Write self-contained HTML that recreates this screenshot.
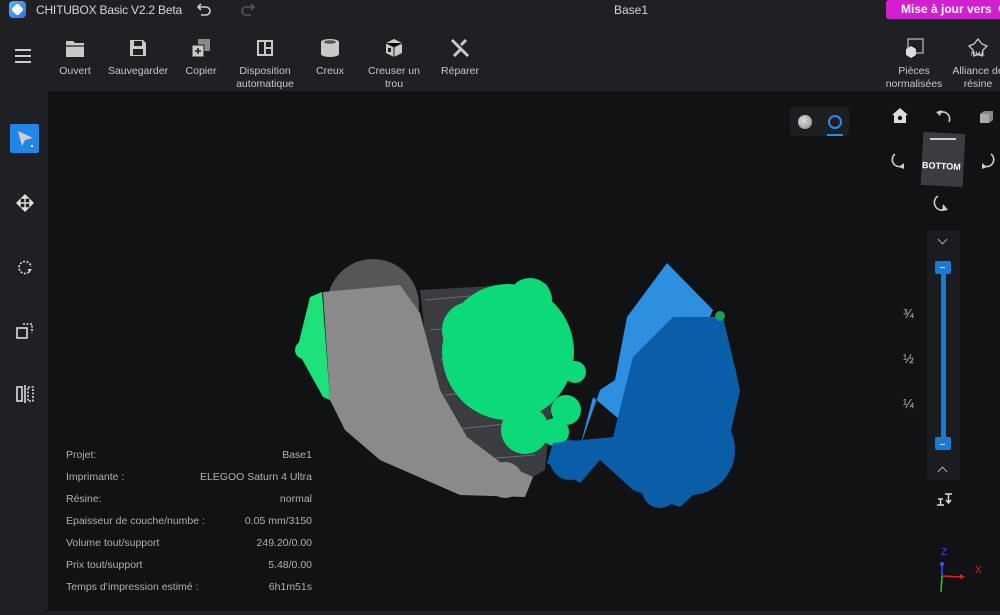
<!DOCTYPE html>
<html><head><meta charset="utf-8">
<style>
*{margin:0;padding:0;box-sizing:border-box}
body{width:1000px;height:615px;overflow:hidden;background:#111214;font-family:"Liberation Sans","DejaVu Sans",sans-serif;color:#c9c9c9;position:relative}
.top{position:absolute;left:0;top:0;width:1000px;height:91px;background:#1f2023}
.title{position:absolute;left:36px;top:3px;font-size:12px;color:#d6d6d6;letter-spacing:-0.2px}
.base{position:absolute;left:614px;top:3px;font-size:12px;color:#d6d6d6}
.upd{position:absolute;left:886px;top:0;width:114px;height:19px;background:#d21fd0;border-radius:3px 0 0 3px;color:#fff;font-weight:bold;font-size:12px;padding:2px 0 0 15px;white-space:nowrap}
.tb{position:absolute;top:37px;text-align:center;font-size:10.5px;color:#c8c8c8;line-height:13px}
.tb svg{display:block;margin:0 auto 6px}
.side{position:absolute;left:0;top:91px;width:48px;height:520px;background:#1f2023;border-radius:0 0 4px 0}
.info{position:absolute;left:66px;font-size:10.5px;color:#b0b0b0;width:246px}
.info span{float:right}
.num{position:absolute;font-size:13px;color:#bbb}
</style></head><body>
<div class="top"></div>
<div style="position:absolute;left:9px;top:1px;width:17px;height:17px;border-radius:4px;background:linear-gradient(135deg,#4fb6ff,#2f6ff0)"></div>
<div style="position:absolute;left:13px;top:5px;width:9px;height:9px;background:#fff;transform:rotate(45deg);border-radius:2px"></div>
<div class="title">CHITUBOX Basic V2.2 Beta</div>
<svg style="position:absolute;left:196px;top:2px" width="16" height="14"><path d="M5 2 L2 5 L5 8 M2 5 H10 a4 4 0 0 1 0 8 H5" fill="none" stroke="#ccc" stroke-width="1.6"/></svg>
<svg style="position:absolute;left:240px;top:2px" width="16" height="14"><path d="M11 2 L14 5 L11 8 M14 5 H6 a4 4 0 0 0 0 8 H11" fill="none" stroke="#555" stroke-width="1.6"/></svg>
<div class="base">Base1</div>
<div class="upd">Mise à jour vers &nbsp;⟳</div>
<div style="position:absolute;left:15px;top:49px;width:16px;height:2px;background:#ccc;box-shadow:0 6px 0 #ccc,0 12px 0 #ccc"></div>
<div class="tb" style="left:55px;width:40px"><svg width="22" height="22"><path d="M2 4h7l2 2h9v14H2z" fill="#c9c9c9"/><path d="M2 9h18" stroke="#1f2023" stroke-width="1.2"/></svg>Ouvert</div>
<div class="tb" style="left:106px;width:64px"><svg width="22" height="22"><path d="M3 3h13l3 3v13H3z" fill="#c9c9c9"/><rect x="7" y="4" width="8" height="5" fill="#1f2023"/><rect x="6" y="12" width="10" height="6" fill="#1f2023"/></svg>Sauvegarder</div>
<div class="tb" style="left:181px;width:40px"><svg width="22" height="22"><rect x="8" y="2" width="12" height="12" fill="#8a8a8a"/><rect x="2" y="8" width="12" height="12" fill="#c9c9c9" stroke="#1f2023"/><path d="M8 11v6M5 14h6" stroke="#1f2023" stroke-width="1.6"/></svg>Copier</div>
<div class="tb" style="left:232px;width:66px"><svg width="22" height="22"><rect x="3" y="3" width="16" height="16" fill="#c9c9c9"/><rect x="5" y="5" width="5" height="12" fill="#1f2023"/><rect x="12" y="5" width="5" height="5" fill="#1f2023"/><rect x="12" y="12" width="5" height="5" fill="#1f2023"/></svg>Disposition<br>automatique</div>
<div class="tb" style="left:310px;width:40px"><svg width="22" height="22"><ellipse cx="11" cy="5" rx="9" ry="3" fill="#c9c9c9"/><path d="M2 5v12a9 3 0 0 0 18 0V5" fill="#c9c9c9"/><ellipse cx="11" cy="5" rx="6" ry="1.7" fill="#555"/></svg>Creux</div>
<div class="tb" style="left:364px;width:60px"><svg width="22" height="22"><path d="M11 2l8 4v10l-8 4-8-4V6z" fill="#c9c9c9"/><path d="M3 6l8 4 8-4M11 10v10" stroke="#1f2023" stroke-width="1"/><rect x="5" y="11" width="3" height="4" fill="#1f2023"/></svg>Creuser un<br>trou</div>
<div class="tb" style="left:438px;width:44px"><svg width="22" height="22"><path d="M3 3l16 16M17 3l-5 5M5 19l6-6" stroke="#c9c9c9" stroke-width="3"/></svg>Réparer</div>
<div class="tb" style="left:884px;width:60px"><svg width="22" height="22"><rect x="5" y="2" width="15" height="14" fill="none" stroke="#999" stroke-width="1.6"/><path d="M8 9l5 3v6l-5 3-5-3v-6z" fill="#ddd"/></svg>Pièces<br>normalisées</div>
<div class="tb" style="left:950px;width:56px"><svg width="22" height="22"><path d="M11 2l4 5 5 2-4 4-1 6-4-2-4 2-1-6-4-4 5-2z" fill="none" stroke="#ccc" stroke-width="1.3"/><text x="4" y="19" font-size="6" fill="#ddd" font-family="Liberation Sans">RMA</text></svg>Alliance de<br>résine</div>

<div class="side"></div>
<div style="position:absolute;left:10px;top:124px;width:29px;height:29px;background:#2186e8;border-radius:2px"></div>
<svg style="position:absolute;left:16px;top:129px" width="20" height="20"><path d="M2 2L17 9 9 11 6 17z" fill="#cfcfcf"/><path d="M15 16h2v2h-2z" fill="#fff"/></svg>
<svg style="position:absolute;left:15px;top:193px" width="20" height="20"><path d="M10 2l3 3h-6zM10 18l3-3h-6zM2 10l3 3v-6zM18 10l-3 3v-6zM10 5v10M5 10h10" stroke="#ddd" fill="#ddd" stroke-width="1.4"/></svg>
<svg style="position:absolute;left:15px;top:257px" width="20" height="20"><path d="M14 15A6 6 0 1 1 16 10" fill="none" stroke="#ddd" stroke-width="1.6" stroke-dasharray="2 1.5"/><path d="M17 12l-3 4-1-4z" fill="#ddd"/></svg>
<svg style="position:absolute;left:15px;top:321px" width="20" height="20"><rect x="2" y="7" width="10" height="10" fill="none" stroke="#ddd" stroke-width="1.6"/><path d="M8 3h9v9" fill="none" stroke="#ddd" stroke-width="1.6" stroke-dasharray="2 1.5"/></svg>
<svg style="position:absolute;left:15px;top:384px" width="20" height="20"><rect x="2" y="3" width="5" height="14" fill="none" stroke="#ddd" stroke-width="1.6"/><path d="M10 1v18" stroke="#ddd" stroke-width="1.6"/><rect x="13" y="3" width="5" height="14" fill="none" stroke="#ddd" stroke-width="1.6" stroke-dasharray="2 1.5"/></svg>

<div style="position:absolute;left:790px;top:107px;width:59px;height:29px;background:#1d1e21;border-radius:3px"></div>
<div style="position:absolute;left:798px;top:115px;width:14px;height:14px;border-radius:50%;background:radial-gradient(circle at 40% 40%,#ddd,#888)"></div>
<div style="position:absolute;left:828px;top:115px;width:14px;height:14px;border-radius:50%;border:2px solid #2a8ae8"></div>
<div style="position:absolute;left:827px;top:134px;width:16px;height:2px;background:#2a8ae8"></div>

<svg style="position:absolute;left:890px;top:106px" width="20" height="20"><path d="M10 2l8 7h-2v8H4V9H2z" fill="#ddd"/><circle cx="10" cy="12" r="2.2" fill="#111"/></svg>
<svg style="position:absolute;left:933px;top:106px" width="20" height="20"><path d="M16 16a7 7 0 0 0-10-9" fill="none" stroke="#ccc" stroke-width="1.6"/><path d="M3 6l6-2-2 6z" fill="#ccc"/></svg>
<svg style="position:absolute;left:977px;top:108px" width="18" height="18"><path d="M3 6l4-3h9v9l-4 3H3z" fill="#888"/><path d="M3 6h9v9H3z" fill="#aaa"/></svg>
<svg style="position:absolute;left:890px;top:150px" width="20" height="20"><path d="M5 4a7 7 0 0 0 7 12" fill="none" stroke="#ccc" stroke-width="1.6"/><path d="M14 13l0 6-5-2z" fill="#ccc"/></svg>
<svg style="position:absolute;left:978px;top:150px" width="20" height="20"><path d="M13 4a7 7 0 0 1-7 12" fill="none" stroke="#ccc" stroke-width="1.6"/><path d="M4 13l0 6 5-2z" fill="#ccc"/></svg>
<svg style="position:absolute;left:932px;top:193px" width="20" height="20"><path d="M6 3a7 7 0 0 0 8 13" fill="none" stroke="#ccc" stroke-width="1.6"/><path d="M11 11l5 6-6 1z" fill="#ccc"/></svg>
<div style="position:absolute;left:922px;top:133px;width:42px;height:53px;background:#3a3c42;transform:rotate(3deg)"></div>
<div style="position:absolute;left:922px;top:161px;font-size:9px;font-weight:bold;color:#fff;transform:rotate(3deg)">BOTTOM</div>
<div style="position:absolute;left:930px;top:138px;width:26px;height:2px;background:#ccc"></div>

<div style="position:absolute;left:927px;top:230px;width:33px;height:250px;background:#1b1c1f;border-radius:3px"></div>
<div style="position:absolute;left:939px;top:236px;width:7px;height:7px;border-right:1.5px solid #aaa;border-bottom:1.5px solid #aaa;transform:rotate(45deg)"></div>
<div style="position:absolute;left:939px;top:468px;width:7px;height:7px;border-left:1.5px solid #aaa;border-top:1.5px solid #aaa;transform:rotate(45deg)"></div>
<div style="position:absolute;left:941px;top:270px;width:5px;height:175px;background:#1a7ad8"></div>
<div style="position:absolute;left:935px;top:261px;width:16px;height:13px;background:#1a7ad8;border-radius:2px"></div>
<div style="position:absolute;left:935px;top:437px;width:16px;height:13px;background:#1a7ad8;border-radius:2px"></div>
<div style="position:absolute;left:940px;top:267px;width:5px;height:1px;background:#cde"></div>
<div style="position:absolute;left:940px;top:444px;width:5px;height:1px;background:#cde"></div>
<div class="num" style="left:903px;top:306px">¾</div>
<div class="num" style="left:903px;top:351px">½</div>
<div class="num" style="left:903px;top:396px">¼</div>
<svg style="position:absolute;left:935px;top:492px" width="18" height="16"><path d="M2 13h7M5.5 13V7M3 7h5M10 2h7M13.5 2v8M11 8l2.5 3 2.5-3" stroke="#ddd" stroke-width="1.4" fill="none"/></svg>
<div style="position:absolute;left:941px;top:547px;font-size:10px;color:#3c4ad8">Z</div>
<div style="position:absolute;left:975px;top:565px;font-size:10px;color:#d22">X</div>
<svg style="position:absolute;left:930px;top:556px" width="45" height="45"><path d="M12 8v12" stroke="#4050ff" stroke-width="1.5"/><path d="M12 20l20 1" stroke="#d22" stroke-width="1.5"/><path d="M12 20l-1 16" stroke="#2c2" stroke-width="1.5"/><circle cx="12" cy="8" r="2" fill="#4050ff"/><path d="M30 18l5 3-5 2z" fill="#d22"/></svg>

<svg style="position:absolute;left:0;top:0" width="1000" height="615">
<polygon points="420,290 547,283 560,330 545,470 533,477 440,470" fill="#3b3c3f"/>
<path d="M425 300 L540 290 M430 330 L545 320 M440 360 L548 350 M445 395 L545 385 M450 430 L540 420 M470 460 L535 455" stroke="#6a6b6e" stroke-width="1"/>
<circle cx="373" cy="305" r="46" fill="#555658"/>
<polygon points="310,297 322,292 330,400 323,397 297,350" fill="#1de27a"/>
<circle cx="304" cy="350" r="9" fill="#1de27a"/>
<g fill="#8a8a8a">
<polygon points="323,292 400,285 420,313 440,390 467,437 500,462 533,477 525,497 460,495 380,460 345,430 330,400"/>
<circle cx="505" cy="480" r="18"/><circle cx="470" cy="480" r="14"/>
<circle cx="440" cy="460" r="22"/><circle cx="400" cy="430" r="28"/>
<circle cx="380" cy="340" r="40"/><circle cx="410" cy="395" r="30"/>
</g>
<g fill="#0cd977">
<ellipse cx="508" cy="352" rx="66" ry="68"/>
<circle cx="575" cy="372" r="11"/><circle cx="566" cy="410" r="15"/>
<circle cx="525" cy="430" r="24"/><circle cx="555" cy="432" r="14"/>
<circle cx="470" cy="330" r="28"/><circle cx="530" cy="300" r="22"/>
</g>
<polygon points="627,317 667,263 713,310 690,360 620,420 593,397 580,447 600,390 615,380" fill="#2e8ee0"/>
<g fill="#0a5ea8">
<polygon points="673,317 723,317 740,390 723,467 680,507 633,490 600,460 580,483 547,463 553,443 613,437 633,357"/>
<circle cx="695" cy="380" r="42"/><circle cx="690" cy="450" r="45"/>
<circle cx="570" cy="460" r="20"/><circle cx="660" cy="490" r="18"/>
</g>
<circle cx="720" cy="316" r="5" fill="#1a9e55"/>
</svg>

<div class="info" style="top:449px">Projet:<span>Base1</span></div>
<div class="info" style="top:471px">Imprimante :<span>ELEGOO Saturn 4 Ultra</span></div>
<div class="info" style="top:493px">Résine:<span>normal</span></div>
<div class="info" style="top:515px">Epaisseur de couche/numbe :<span>0.05 mm/3150</span></div>
<div class="info" style="top:537px">Volume tout/support<span>249.20/0.00</span></div>
<div class="info" style="top:559px">Prix tout/support<span>5.48/0.00</span></div>
<div class="info" style="top:581px">Temps d’impression estimé :<span>6h1m51s</span></div>
<div style="position:absolute;left:0;top:611px;width:1000px;height:4px;background:#1f2023"></div>
</body></html>
